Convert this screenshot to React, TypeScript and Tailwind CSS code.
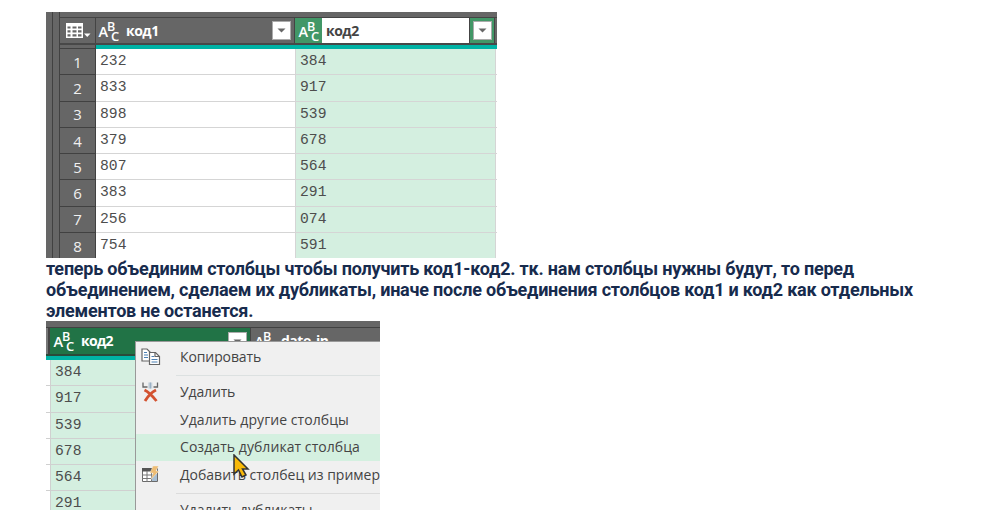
import React from "react";

const UI = "font-['Open_Sans','Noto_Sans',sans-serif]";
const MONO = "font-['Liberation_Mono',monospace]";

const ROWS = [
  ["232", "384"],
  ["833", "917"],
  ["898", "539"],
  ["379", "678"],
  ["807", "564"],
  ["383", "291"],
  ["256", "074"],
  ["754", "591"],
];

function TypeIcon() {
  return (
    <svg width="22" height="22" viewBox="0 0 22 22" className="shrink-0 overflow-visible" fill="#fff" fontFamily="'Open Sans', sans-serif" fontWeight="600">
      <text x="-0.5" y="17" fontSize="14.5">A</text>
      <text x="8" y="11" fontSize="12.5">B</text>
      <text x="12" y="20.5" fontSize="13">C</text>
    </svg>
  );
}

function FilterButton() {
  return (
    <div className="flex h-[19px] w-[19px] shrink-0 items-center justify-center border border-[#ababab] bg-white">
      <svg width="9" height="5" viewBox="0 0 9 5">
        <path d="M0.5 0.5h8l-4 4z" fill="#686868" />
      </svg>
    </div>
  );
}

function TableIcon() {
  return (
    <svg width="26" height="18" viewBox="0 0 26 18" className="shrink-0">
      <path d="M1 1h17v15H1z" fill="#fff" />
      <path d="M2.5 4.5h3v2h-3zM7.5 4.5h4v2h-4zM13 4.5h3.5v2H13zM2.5 8.3h3v2.2h-3zM7.5 8.3h4v2.2h-4zM13 8.3h3.5v2.2H13zM2.5 12.3h3v2.2h-3zM7.5 12.3h4v2.2h-4zM13 12.3h3.5v2.2H13z" fill="#686868" />
      <path d="M19 11.5h6.5l-3.25 3.5z" fill="#fff" />
    </svg>
  );
}

function FirstTable() {
  return (
    <div className="flex h-[246px] w-[451px] overflow-hidden bg-[#666]">
      <div className="flex w-[14px] shrink-0 border-r border-[#414141]">
        <div className="w-[7px] border-r border-[#414141]" />
      </div>
      <div className="flex flex-1 flex-col">
        <div className="h-[6px] shrink-0 border-b border-[#444]" />
        <div className="flex h-[27px] shrink-0 border-b-2 border-[#484848]">
          <div className="flex w-[36px] items-center border-r border-[#444] pl-[4.5px] pt-px">
            <TableIcon />
          </div>
          <div className="flex w-[199px] items-center border-r border-[#444] pl-[3px] pr-[3px]">
            <TypeIcon />
            <span className={`${UI} ml-[5px] flex-1 text-[14px] leading-[20px] font-bold tracking-[-0.5px] text-white`}>код1</span>
            <FilterButton />
          </div>
          <div className="flex w-[27px] items-center bg-[#429767] pl-[4px]">
            <TypeIcon />
          </div>
          <div className="flex flex-1 items-center bg-white pl-[4px]">
            <span className={`${UI} text-[14px] leading-[20px] font-bold tracking-[-0.5px] text-[#444]`}>код2</span>
          </div>
          <div className="flex w-[26px] items-center justify-center border-x border-[#444] bg-[#429767]">
            <FilterButton />
          </div>
          <div className="w-[2px] bg-[#666]" />
        </div>
        <div className="flex h-[4px] shrink-0">
          <div className="w-[36px] border-r border-b border-[#414141]" />
          <div className="flex-1 bg-[#00b3a5]" />
        </div>
        {ROWS.map(([a, b], i) => (
          <div key={i} className="flex h-[26.25px] shrink-0">
            <div className={`${UI} flex w-[36px] items-center justify-center border-r border-b border-[#414141] pt-px text-[15px] text-[#f0f0f0]`}>{i + 1}</div>
            <div className={`${MONO} w-[200px] border-r border-b border-[#d5d5d5] bg-white pl-[4px] text-[14.7px] leading-[25.5px] text-[#4d4d4d]`}>{a}</div>
            <div className={`${MONO} w-[200px] border-r border-b border-[#d5d5d5] bg-[#d4efe0] pl-[4px] text-[14.7px] leading-[25.5px] text-[#4d4d4d]`}>{b}</div>
            <div className="flex-1 border-b border-[#d5d5d5] bg-white" />
          </div>
        ))}
      </div>
    </div>
  );
}

function CopyIcon() {
  return (
    <svg width="20" height="18" viewBox="0 0 20 18" fill="#fff" stroke="#646464" strokeWidth="1.2">
      <path d="M1 1h5l3 3v9H1z" />
      <path d="M3 4.5h3M3 7h4M3 9.5h4" stroke="#4b80b4" />
      <path d="M8.5 4.5h6l4 4v8h-10z" />
      <path d="M14 4.5v4h4" fill="none" />
      <path d="M10.5 8.5h2.5M10.5 11.5h6M10.5 14h6" stroke="#4b80b4" />
    </svg>
  );
}

function DeleteIcon() {
  return (
    <svg width="20" height="21" viewBox="0 0 20 21" fill="none">
      <path d="M2 0.5V5h4.5M16.5 0.5V5H12.5" stroke="#666" strokeWidth="1.3" />
      <path d="M7.3 0.5h4v6h-4z" fill="#c5d0da" />
      <path d="M9.3 0.5v6" stroke="#90a9c0" />
      <path d="M3.5 8c4 2 8 6 12 11M15 8c-4 2-8 6-11 11" stroke="#d35230" strokeWidth="2.8" />
    </svg>
  );
}

function ExampleIcon() {
  return (
    <svg width="19" height="18" viewBox="0 0 19 18" fill="none">
      <path d="M1.5 2.5h15v13h-15z" fill="#fff" stroke="#6a6a6a" />
      <path d="M1 2h10v3.5H1z" fill="#555" />
      <path d="M11 8h5v7h-5z" fill="#a9bfd3" />
      <path d="M1 9h10M1 12.5h10M6 5v11M10.5 5v11" stroke="#777" />
      <path d="M12 0h5.5L15 5h3l-8 8.5 2-6.5H9z" fill="#edbd75" stroke="#f0f0f0" strokeWidth="0.4" />
    </svg>
  );
}

function MenuItem({ children, icon, active, spacing = "tracking-[0]" }: { children: React.ReactNode; icon?: React.ReactNode; active?: boolean; spacing?: string }) {
  return (
    <div className={`flex h-[27.5px] shrink-0 items-center ${active ? "bg-[#d4f0e0]" : ""}`}>
      <div className="flex w-[44px] shrink-0 pl-[5px]">{icon}</div>
      <span className={`${UI} ${spacing} whitespace-nowrap text-[14px] leading-[20px] text-[#444]`}>{children}</span>
    </div>
  );
}

function SecondTable() {
  return (
    <div className="relative mt-px h-[189px] w-[334px] overflow-hidden bg-white">
      <div className="h-[7px] border-b border-[#414141] bg-[#666]" />
      <div className="flex h-[28px] border-b-2 border-[#2b4a39] bg-[#666]">
        <div className="w-[4px] border-r-2 border-[#444] bg-[#777]" />
        <div className="flex w-[200px] items-center bg-[#217346] pl-[4px] pr-[3px]">
          <TypeIcon />
          <span className={`${UI} ml-[5px] flex-1 text-[14px] leading-[20px] font-bold tracking-[-0.7px] text-white`}>код2</span>
          <FilterButton />
        </div>
        <div className="flex flex-1 items-center border-l border-[#444] pl-[4px]">
          <TypeIcon />
          <span className={`${UI} ml-[4px] text-[14px] leading-[20px] font-bold tracking-[-0.5px] text-white`}>date_in</span>
        </div>
      </div>
      <div className="h-[4px] bg-[#00b3a5]" />
      {ROWS.slice(0, 6).map(([, value], i) => (
        <div key={i} className="flex h-[26.25px]">
          <div className="w-[5px] border-r border-b border-[#d0d0d0]" />
          <div className={`${MONO} flex-1 border-b border-[#d0d0d0] bg-[#d4efe0] pl-[4px] text-[14.7px] leading-[25px] text-[#4d4d4d]`}>{value}</div>
        </div>
      ))}
      <div className="absolute top-[20px] left-[89px] flex h-[180px] w-[250px] flex-col border-t border-l border-[#999] bg-[#f0f0f0] pt-px">
        <MenuItem spacing="tracking-[-0.1px]" icon={<CopyIcon />}>Копировать</MenuItem>
        <div className="mt-[4.5px] mb-[2.5px] ml-[40px] h-px shrink-0 bg-[#dce1e1]" />
        <MenuItem spacing="tracking-[-0.15px]" icon={<DeleteIcon />}>Удалить</MenuItem>
        <MenuItem spacing="tracking-[0.06px]">Удалить другие столбцы</MenuItem>
        <MenuItem spacing="tracking-[0.06px]" active>Создать дубликат столбца</MenuItem>
        <MenuItem icon={<ExampleIcon />}>Добавить столбец из примеров</MenuItem>
        <div className="mt-[4px] mb-[3px] ml-[40px] h-px shrink-0 bg-[#dcdcdc]" />
        <MenuItem>Удалить дубликаты</MenuItem>
      </div>
      <svg className="absolute top-[133px] left-[187px]" width="17" height="26" viewBox="0 0 17 26">
        <path d="M1 1v19l4.5-4 3.5 7 4-2-3.5-6H15z" fill="#f8b908" stroke="#333" strokeWidth="1.5" />
      </svg>
    </div>
  );
}

export default function App() {
  return (
    <main className="h-[512px] w-[987px] overflow-hidden bg-white pt-[12px] pl-[46px]">
      <FirstTable />
      <p className="h-[62px] font-['Roboto',sans-serif] text-[18px] leading-[21px] font-bold tracking-[-0.21px] whitespace-nowrap text-[#172b4d]">
        <span className="block">теперь объединим столбцы чтобы получить код1-код2. тк. нам столбцы нужны будут, то перед</span>
        <span className="block">объединением, сделаем их дубликаты, иначе после объединения столбцов код1 и код2 как отдельных</span>
        <span className="block">элементов не останется.</span>
      </p>
      <SecondTable />
    </main>
  );
}
